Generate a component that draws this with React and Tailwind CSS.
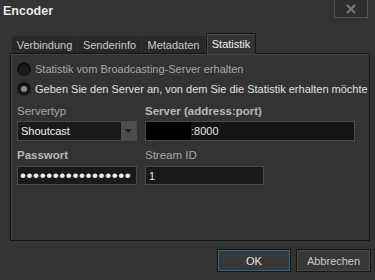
import React, { useState } from "react";

const font = { fontFamily: "'Liberation Sans', Arial, sans-serif" };

function Radio({ checked, label, dim }) {
  return (
    <div className="flex h-[20px] items-center gap-[4px] whitespace-nowrap">
      <span className="flex h-[14px] w-[14px] shrink-0 items-center justify-center rounded-full border border-[#161616] bg-[#1b1b1b] shadow-[inset_0_1px_1px_#000]">
        {checked && <span className="h-[6px] w-[6px] rounded-full bg-[#8a8a8a]" />}
      </span>
      <span className={dim ? "text-[#a8a8a8]" : "text-[#e0e0e0]"}>{label}</span>
    </div>
  );
}

export default function App() {
  const [tab] = useState("Statistik");
  const tabs = [
    { name: "Verbindung", w: "w-[65px]" },
    { name: "Senderinfo", w: "w-[63px]" },
    { name: "Metadaten", w: "w-[63px]" },
    { name: "Statistik", w: "w-[50px]" },
  ];

  return (
    <div
      className="flex h-[280px] w-[375px] flex-col overflow-hidden bg-[#333333] text-[11px] leading-[16px] text-[#cfcfcf]"
      style={font}
    >
      {/* Title bar */}
      <div className="flex h-[33px] items-start justify-between pl-[3px] pr-[7px]">
        <span className="mt-[2px] text-[12.5px] font-bold leading-[18px] text-[#e8e8e8]">Encoder</span>
        <button className="flex h-[18px] w-[34px] items-center justify-center border border-t-0 border-[#555555] bg-[#2e2e2e]">
          <svg width="10" height="10" viewBox="0 0 10 10">
            <path d="M1 1 L9 9 M9 1 L1 9" stroke="#7a7a7a" strokeWidth="2.2" />
          </svg>
        </button>
      </div>

      {/* Tabs */}
      <div className="relative z-10 flex h-[20px] items-end gap-px pl-[12px]">
        {tabs.map((t) =>
          t.name === tab ? (
            <div
              key={t.name}
              className={`${t.w} -mb-px flex h-[21px] items-center justify-center whitespace-nowrap border border-b-0 border-[#151515] bg-[#333333] text-[#f2f2f2] shadow-[inset_1px_1px_0_#4a4a4a]`}
            >
              {t.name}
            </div>
          ) : (
            <div
              key={t.name}
              className={`${t.w} flex h-[17px] items-center justify-center whitespace-nowrap bg-[#282828] text-[#c8c8c8]`}
            >
              {t.name}
            </div>
          )
        )}
      </div>

      {/* Panel */}
      <div className="mx-[10px] flex h-[188px] w-[360px] flex-col border border-[#151515] pl-[6px] pt-[5px] shadow-[inset_1px_1px_0_#444444]">
        <Radio label="Statistik vom Broadcasting-Server erhalten" dim />
        <Radio label="Geben Sie den Server an, von dem Sie die Statistik erhalten möchte" checked />

        <div className="mt-[4px] flex">
          <div className="w-[128px] text-[11.5px] text-[#a8a8a8]">Servertyp</div>
          <div className="text-[11.5px] font-bold text-[#b8b8b8]">Server (address:port)</div>
        </div>
        <div className="mt-[2px] flex">
          <div className="flex h-[20px] w-[120px] items-center border border-[#4a4a4a] bg-[#1a1a1a]">
            <span className="flex-1 pl-[3px] text-[#f0f0f0]">Shoutcast</span>
            <span className="flex h-[18px] w-[15px] items-center justify-center bg-[#4e4e4e]">
              <svg width="7" height="4" viewBox="0 0 7 4">
                <path d="M0 0 H7 L3.5 4 Z" fill="#1e1e1e" />
              </svg>
            </span>
          </div>
          <div className="ml-[8px] flex h-[20px] w-[210px] items-center border border-[#4a4a4a] bg-[#141414]">
            <span className="h-full w-[45px] bg-black" />
            <span className="text-[#e6e6e6]">:8000</span>
          </div>
        </div>

        <div className="mt-[6px] flex">
          <div className="w-[128px] text-[11.5px] font-bold text-[#b8b8b8]">Passwort</div>
          <div className="text-[11.5px] text-[#a8a8a8]">Stream ID</div>
        </div>
        <div className="mt-[3px] flex">
          <div className="h-[19px] w-[120px] overflow-hidden whitespace-nowrap border border-[#4a4a4a] bg-[#1a1a1a] pl-[2px] text-[17px] leading-[17px] tracking-[0.6px] text-[#f0f0f0]">
            •••••••••••••••••
          </div>
          <div className="ml-[8px] flex h-[19px] w-[119px] items-center border border-[#4a4a4a] bg-[#1a1a1a] pl-[3px] text-[#e6e6e6]">
            1
          </div>
        </div>
      </div>

      {/* Buttons */}
      <div className="mt-[8px] flex justify-end gap-[5px] pr-[4px]">
        <button className="flex h-[23px] w-[74px] items-center justify-center border border-[#161616] bg-[#383838] text-[#e8e8e8] shadow-[inset_0_0_0_1px_#2d6a8c]">
          OK
        </button>
        <button className="flex h-[23px] w-[75px] items-center justify-center border border-[#161616] bg-[#383838] text-[#c8c8c8] shadow-[inset_0_0_0_1px_#474747]">
          Abbrechen
        </button>
      </div>
    </div>
  );
}
